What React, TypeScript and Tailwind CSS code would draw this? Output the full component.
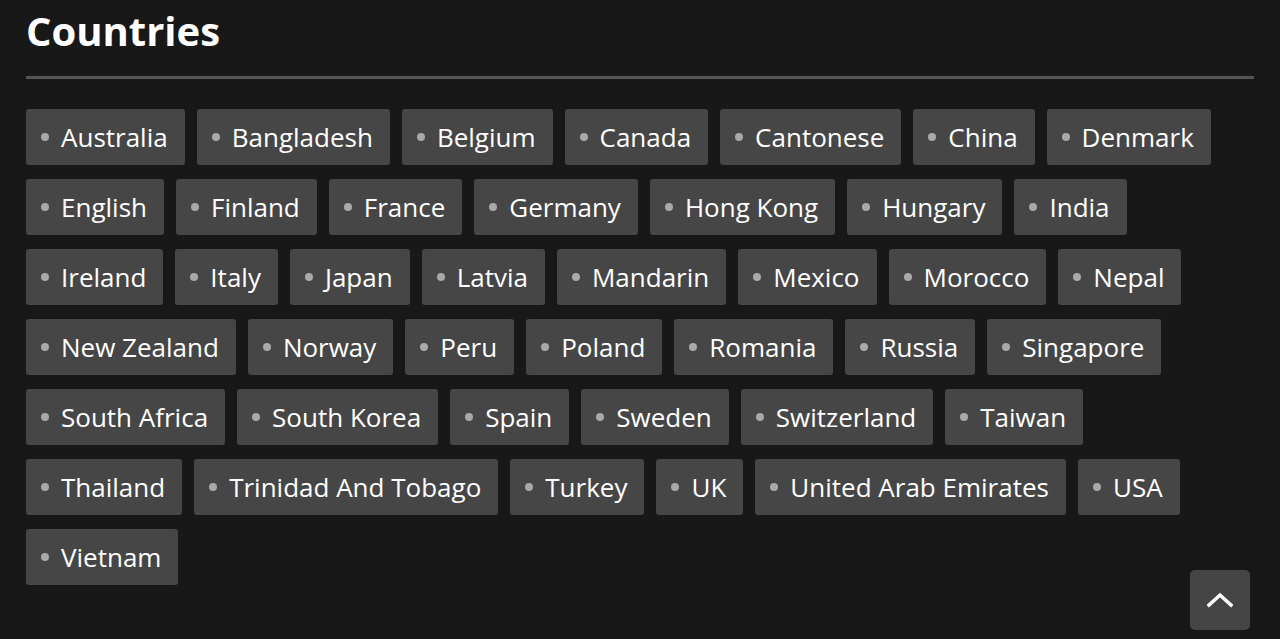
import React from "react";

const countries = [
  "Australia","Bangladesh","Belgium","Canada","Cantonese","China","Denmark",
  "English","Finland","France","Germany","Hong Kong","Hungary","India",
  "Ireland","Italy","Japan","Latvia","Mandarin","Mexico","Morocco","Nepal",
  "New Zealand","Norway","Peru","Poland","Romania","Russia","Singapore",
  "South Africa","South Korea","Spain","Sweden","Switzerland","Taiwan",
  "Thailand","Trinidad And Tobago","Turkey","UK","United Arab Emirates","USA",
  "Vietnam",
];

export default function App() {
  return (
    <div
      className="relative w-[1280px] h-[639px] overflow-hidden bg-[#181818] text-white"
      style={{ fontFamily: '"Open Sans", sans-serif' }}
    >
      <div className="px-[26px] pt-[6px]">
        <h2 className="text-[40px] font-bold leading-[50px] text-white">Countries</h2>
        <div className="mt-[20px] h-[3px] bg-[#555555]" />
        <div className="mt-[30px] flex flex-wrap">
          {countries.map((c) => (
            <a
              key={c}
              href="#"
              className="mb-[14px] mr-[12px] flex h-[56px] items-center gap-[12px] rounded-[3px] bg-[#464646] pl-[15px] pr-[17px] text-[26px] leading-none text-white"
            >
              <span className="h-[8px] w-[8px] rounded-full bg-[#a9a9a9]" />
              <span>{c}</span>
            </a>
          ))}
        </div>
      </div>
      <button className="absolute left-[1190px] top-[570px] flex h-[60px] w-[60px] items-center justify-center rounded-[5px] bg-[#454545]">
        <svg width="26" height="16" viewBox="0 0 26 16" fill="none">
          <path d="M2 13 L13 3 L24 13" stroke="white" strokeWidth="3.5" strokeLinecap="square" />
        </svg>
      </button>
    </div>
  );
}
